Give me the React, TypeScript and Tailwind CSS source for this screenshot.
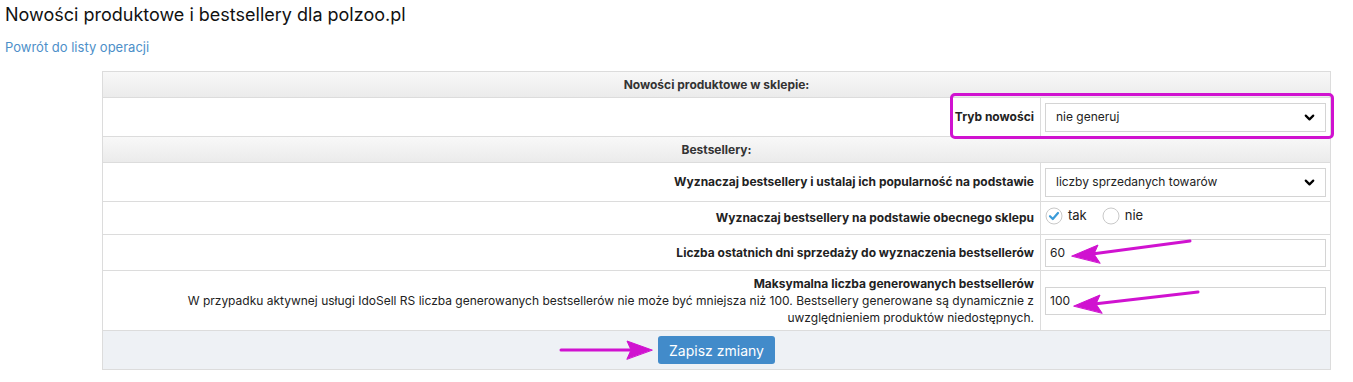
import { ChevronDown } from 'lucide-react'

const font = { fontFamily: 'Inter, "Noto Sans", sans-serif' }

function SectionHeader({ title }: { title: string }) {
  return (
    <div className="col-span-2 h-[26px] flex items-center justify-center border-b border-[#dcdcdc] bg-gradient-to-b from-[#f8f8f8] to-[#ebebeb] text-[12px] font-bold text-[#333]">
      {title}
    </div>
  )
}

function Select({ value }: { value: string }) {
  return (
    <div className="h-[29px] flex items-center justify-between border border-[#d4d4d4] bg-white pl-[10px] pr-[8px] text-[12px] text-[#222]">
      <span>{value}</span>
      <ChevronDown className="size-[15px] text-black" strokeWidth={3.5} />
    </div>
  )
}

function TextInput({ value }: { value: string }) {
  return (
    <div className="h-[28px] flex items-center border border-[#d4d4d4] bg-white px-[4px] text-[12px] text-[#222]">
      {value}
    </div>
  )
}

function Row({ label, children, h }: { label: React.ReactNode; children: React.ReactNode; h: string }) {
  return (
    <>
      <div className={`${h} flex items-center justify-end border-b border-r border-[#dcdcdc] pr-[6px] text-right text-[12px] text-[#222]`}>
        {label}
      </div>
      <div className={`${h} flex items-center border-b border-[#dcdcdc] px-[4px]`}>{children}</div>
    </>
  )
}

function Radio({ checked }: { checked?: boolean }) {
  return (
    <svg width="18" height="18" viewBox="0 0 18 18">
      <circle cx="9" cy="9" r="8" fill="white" stroke="#c9c9c9" strokeWidth="1" />
      {checked && <path d="M5 9.2 L7.8 12 L13 6" fill="none" stroke="#3a9bd9" strokeWidth="2.2" strokeLinecap="round" strokeLinejoin="round" />}
    </svg>
  )
}

export default function App() {
  return (
    <div className="relative w-[1353px] h-[382px] bg-white overflow-hidden" style={font}>
      <h1 className="pl-[5px] pt-[3px] text-[18px] leading-[24px] text-[#111]">Nowości produktowe i bestsellery dla polzoo.pl</h1>
      <a className="block pl-[5px] mt-[12px] text-[13px] leading-[16px] text-[#4d8fc9]">Powrót do listy operacji</a>

      <div className="ml-[102px] mt-[16px] w-[1229px] grid grid-cols-[1fr_289px] border border-[#dcdcdc]">
        <SectionHeader title="Nowości produktowe w sklepie:" />
        <Row h="h-[39px]" label={<b>Tryb nowości</b>}>
          <div className="w-full"><Select value="nie generuj" /></div>
        </Row>
        <SectionHeader title="Bestsellery:" />
        <Row h="h-[39px]" label={<b>Wyznaczaj bestsellery i ustalaj ich popularność na podstawie</b>}>
          <div className="w-full"><Select value="liczby sprzedanych towarów" /></div>
        </Row>
        <Row h="h-[33px]" label={<b>Wyznaczaj bestsellery na podstawie obecnego sklepu</b>}>
          <div className="flex items-center gap-[5px] text-[13px] text-[#222] -mt-[5px]">
            <Radio checked />
            <span>tak</span>
            <span className="ml-[10px]"><Radio /></span>
            <span>nie</span>
          </div>
        </Row>
        <Row h="h-[36px]" label={<b>Liczba ostatnich dni sprzedaży do wyznaczenia bestsellerów</b>}>
          <div className="w-full"><TextInput value="60" /></div>
        </Row>
        <Row
          h="h-[60px]"
          label={
            <div className="leading-[17px]">
              <b>Maksymalna liczba generowanych bestsellerów</b>
              <br />
              W przypadku aktywnej usługi IdoSell RS liczba generowanych bestsellerów nie może być mniejsza niż 100. Bestsellery generowane są dynamicznie z
              <br />
              uwzględnieniem produktów niedostępnych.
            </div>
          }
        >
          <div className="w-full"><TextInput value="100" /></div>
        </Row>
        <div className="col-span-2 h-[38px] flex items-center justify-center bg-[#eef1f5]">
          <button className="h-[28px] px-[11px] rounded-[3px] bg-[#428bca] text-[14px] text-white">Zapisz zmiany</button>
        </div>
      </div>

      {/* annotations */}
      <div className="absolute left-[950px] top-[93px] w-[384px] h-[46px] border-[3px] border-[#d012d0] rounded-[5px]" />
      <svg className="absolute left-0 top-0" width="1353" height="382">
        <g fill="#d012d0" stroke="#d012d0" strokeLinecap="round">
          <line x1="1190" y1="241" x2="1092" y2="254" strokeWidth="3" />
          <polygon points="1072,256 1098,245 1094,254 1100,263" />
          <line x1="1198" y1="292" x2="1094" y2="304" strokeWidth="3" />
          <polygon points="1074,306 1100,295 1096,304 1102,313" />
          <line x1="561" y1="350" x2="632" y2="350" strokeWidth="3" />
          <polygon points="652,350 627,341 631,350 627,359" />
        </g>
      </svg>
    </div>
  )
}
